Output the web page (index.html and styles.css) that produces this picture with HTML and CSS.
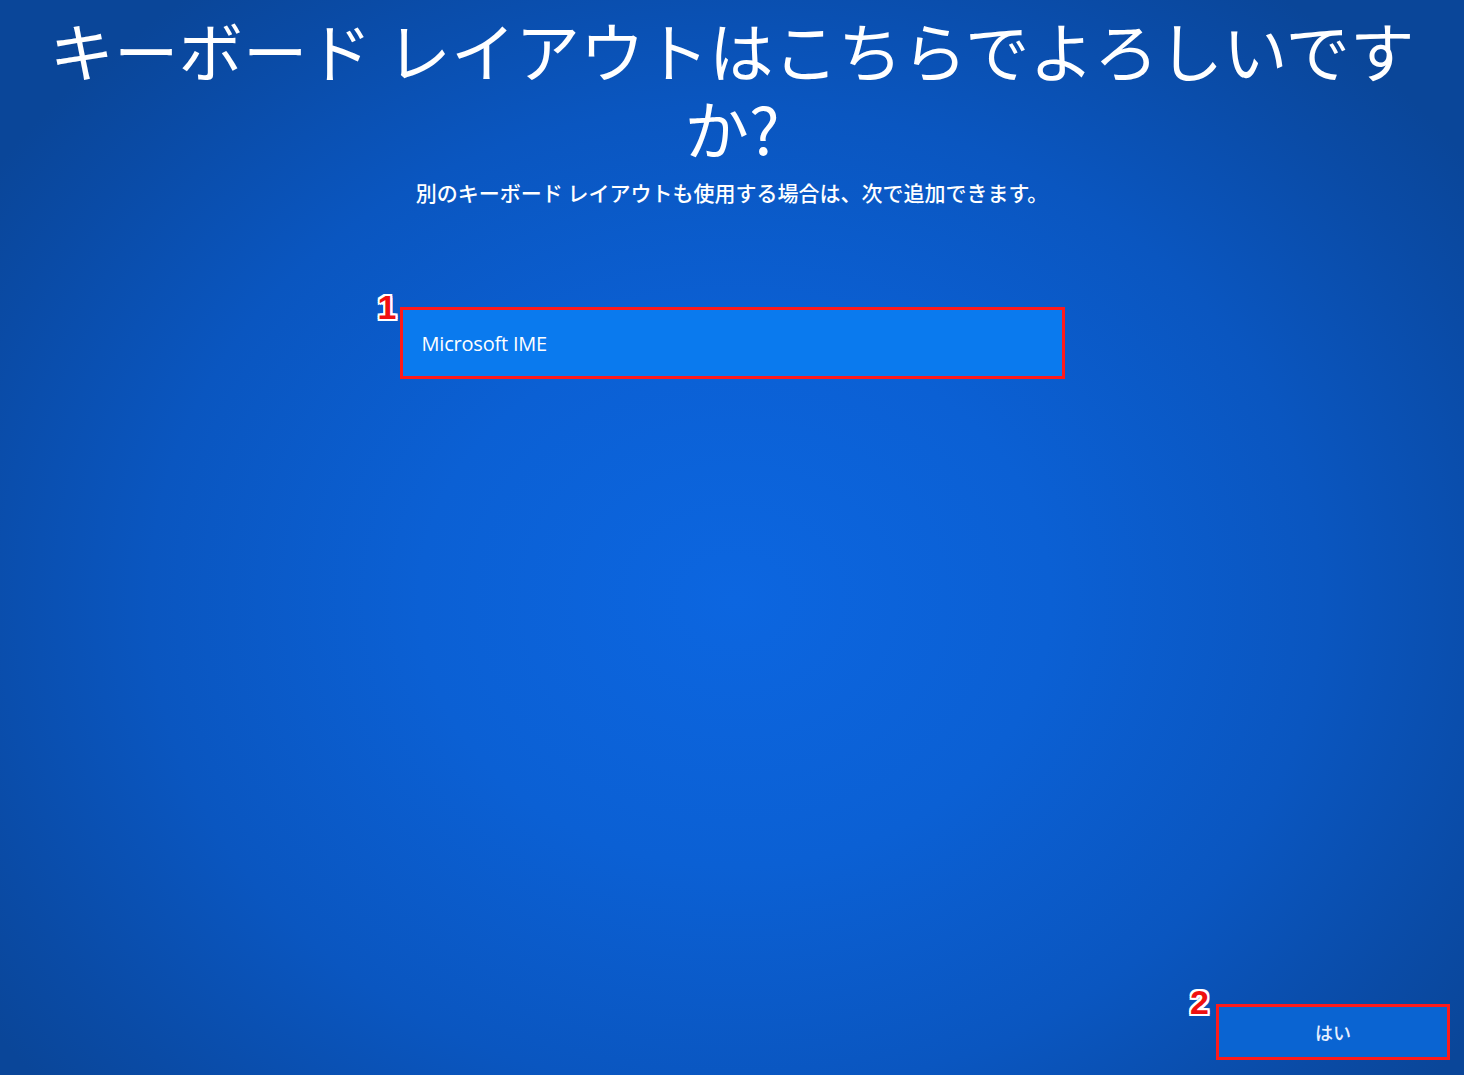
FILE: index.html
```html
<!DOCTYPE html>
<html lang="ja">
<head>
<meta charset="utf-8">
<title>キーボード レイアウト</title>
<link rel="stylesheet" href="styles.css">
</head>
<body>
<div class="screen">
  <main class="content">
    <h1 class="title">キーボード レイアウトはこちらでよろしいですか?</h1>
    <p class="subtitle">別のキーボード レイアウトも使用する場合は、次で追加できます。</p>
    <div class="list">
      <div class="item">
        <span class="marker marker-1">1</span>
        <div class="item-inner">Microsoft IME</div>
      </div>
    </div>
  </main>
  <footer class="footer">
    <div class="btn-wrap">
      <span class="marker marker-2">2</span>
      <button class="btn">はい</button>
    </div>
  </footer>
</div>
</body>
</html>
```
FILE: styles.css
```css
html, body {
  margin: 0;
  padding: 0;
  height: 100%;
}
body {
  font-family: "Noto Sans CJK JP", "Noto Sans", sans-serif;
  color: #fff;
  background: #0b4aa0;
  overflow: hidden;
}
.screen {
  width: 1464px;
  height: 1075px;
  display: flex;
  flex-direction: column;
  background:
    radial-gradient(ellipse 900px 760px at 735px 600px, #0c66e0 0%, #0b60d4 35%, #0a56c0 65%, #0a4ba6 88%, #0a4699 100%);
}
.content {
  display: flex;
  flex-direction: column;
  align-items: center;
}
.title {
  margin: 10px 0 0;
  width: 1420px;
  text-align: center;
  font-size: 64.5px;
  font-weight: 400;
  line-height: 78px;
  letter-spacing: 0;
}
.subtitle {
  margin: 11px 0 0;
  font-size: 21px;
  font-weight: 500;
  line-height: 30px;
}
.list {
  margin-top: 100px;
}
.item {
  position: relative;
  width: 659px;
  height: 66px;
  border: 3px solid #ff1a1a;
  background: #0a7aee;
  display: flex;
  align-items: center;
}
.item-inner {
  padding-left: 19px;
  font-family: "Open Sans", "Noto Sans", sans-serif;
  font-size: 20px;
  font-weight: 500;
  letter-spacing: -0.2px;
}
.marker {
  position: absolute;
  font-family: "Liberation Sans", Arial, sans-serif;
  font-weight: 700;
  font-size: 34px;
  line-height: 34px;
  color: #f01010;
  text-shadow:
    -2px 0 #fff, 2px 0 #fff, 0 -2px #fff, 0 2px #fff,
    -2px -2px #fff, 2px -2px #fff, -2px 2px #fff, 2px 2px #fff;
}
.marker-1 {
  left: -25px;
  top: -20px;
}
.footer {
  margin-top: auto;
  display: flex;
  justify-content: flex-end;
  padding: 0 14px 15px 0;
}
.btn-wrap {
  position: relative;
}
.btn {
  width: 234px;
  height: 56px;
  border: 3px solid #ff1a1a;
  background: #0a64d2;
  color: #e8f0ff;
  font-family: "Noto Sans CJK JP", sans-serif;
  font-size: 18px;
  font-weight: 500;
  padding: 0;
  display: block;
}
.marker-2 {
  left: -26px;
  top: -19px;
}
```
